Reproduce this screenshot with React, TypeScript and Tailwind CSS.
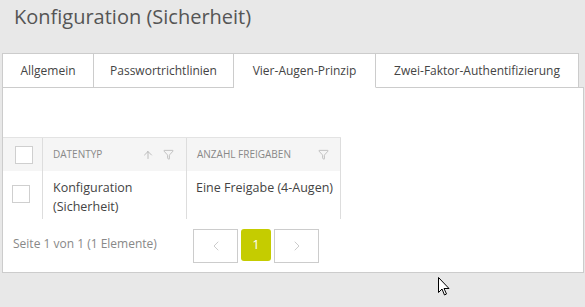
import { ChevronLeft, ChevronRight, ArrowUp, Filter } from "lucide-react";

const tabs = ["Allgemein", "Passwortrichtlinien", "Vier-Augen-Prinzip", "Zwei-Faktor-Authentifizierung"];
const tabWidths = ["w-[92px]", "w-[140px]", "w-[142px]", "w-[203px]"];

function Checkbox() {
  return <div className="w-[18px] h-[18px] border border-[#cfcfcf] bg-white" />;
}

export default function App() {
  const active = 2;

  return (
    <div className="relative w-[585px] h-[307px] overflow-hidden bg-[#e8e8e8] font-['Open_Sans',sans-serif] text-[#444]">
      {/* Title */}
      <div className="h-[53px] pl-[14px] pt-[3px] text-[20px] leading-[28px] text-[#555]">
        Konfiguration (Sicherheit)
      </div>

      <div className="ml-[2px] w-[582px]">
        {/* Tab strip */}
        <div className="flex h-[35px]">
          {tabs.map((t, i) => (
            <div
              key={t}
              className={
                "flex items-center justify-center bg-white border-t border-r border-[#ccc] text-[12px] " +
                tabWidths[i] +
                (i === 0 ? " border-l" : "") +
                (i === active ? " border-b border-b-white" : " border-b")
              }
            >
              {t}
            </div>
          ))}
          <div className="flex-1 border-b border-[#ccc]" />
        </div>

        {/* Panel */}
        <div className="h-[185px] bg-white border-x border-b border-[#ccc]">
          <div className="h-[49px]" />

          {/* Grid */}
          <div className="w-[338px] text-[12.5px]">
            <div className="flex h-[34px] bg-[#f5f5f5] border-t border-[#e3e3e3] text-[10px] uppercase text-[#888]">
              <div className="w-[40px] flex items-center justify-center border-r border-[#ddd] pl-[2px]">
                <Checkbox />
              </div>
              <div className="w-[144px] flex items-center pl-[10px] pr-[12px] border-r border-[#ddd]">
                <span className="flex-1">Datentyp</span>
                <ArrowUp className="w-[12px] h-[12px] text-[#aaa]" strokeWidth={1.5} />
                <Filter className="w-[11px] h-[11px] ml-[9px] text-[#aaa]" strokeWidth={1.5} />
              </div>
              <div className="flex-1 flex items-center pl-[10px] pr-[11px] border-r border-[#ddd]">
                <span className="flex-1">Anzahl Freigaben</span>
                <Filter className="w-[11px] h-[11px] text-[#aaa]" strokeWidth={1.5} />
              </div>
            </div>
            <div className="flex h-[48px]">
              <div className="w-[40px] flex justify-center pt-[14px] border-r border-[#ddd] pr-[4px]">
                <Checkbox />
              </div>
              <div className="w-[144px] pl-[10px] pt-[7px] leading-[19px] border-r border-[#ddd]">
                Konfiguration
                <br />
                (Sicherheit)
              </div>
              <div className="flex-1 pl-[9px] pt-[7px] leading-[19px] border-r border-[#ddd]">
                Eine Freigabe (4-Augen)
              </div>
            </div>
          </div>

          {/* Pager */}
          <div className="flex items-start h-[52px] pt-[10px]">
            <div className="w-[190px] pl-[10px] pt-[6px] text-[12px] text-[#888]">
              Seite 1 von 1 (1 Elemente)
            </div>
            <div className="flex gap-[3px]">
              <div className="w-[45px] h-[34px] flex items-center justify-center border border-[#ccc] bg-white">
                <ChevronLeft className="w-[16px] h-[16px] text-[#ccc]" strokeWidth={1.5} />
              </div>
              <div className="w-[30px] h-[32px] flex items-center justify-center rounded-[3px] bg-[#c5cc00] text-white text-[13px]">
                1
              </div>
              <div className="w-[45px] h-[34px] flex items-center justify-center border border-[#ccc] bg-white">
                <ChevronRight className="w-[16px] h-[16px] text-[#ccc]" strokeWidth={1.5} />
              </div>
            </div>
          </div>
        </div>
      </div>

      {/* Mouse pointer */}
      <svg className="absolute left-[438px] top-[277px]" width="12" height="19" viewBox="0 0 12 19">
        <path d="M0.5 0.5 L0.5 15.5 L4 12 L6.5 18 L8.5 17 L6 11.5 L11 11.5 Z" fill="white" stroke="black" strokeWidth="1" strokeLinejoin="miter" />
      </svg>
    </div>
  );
}
